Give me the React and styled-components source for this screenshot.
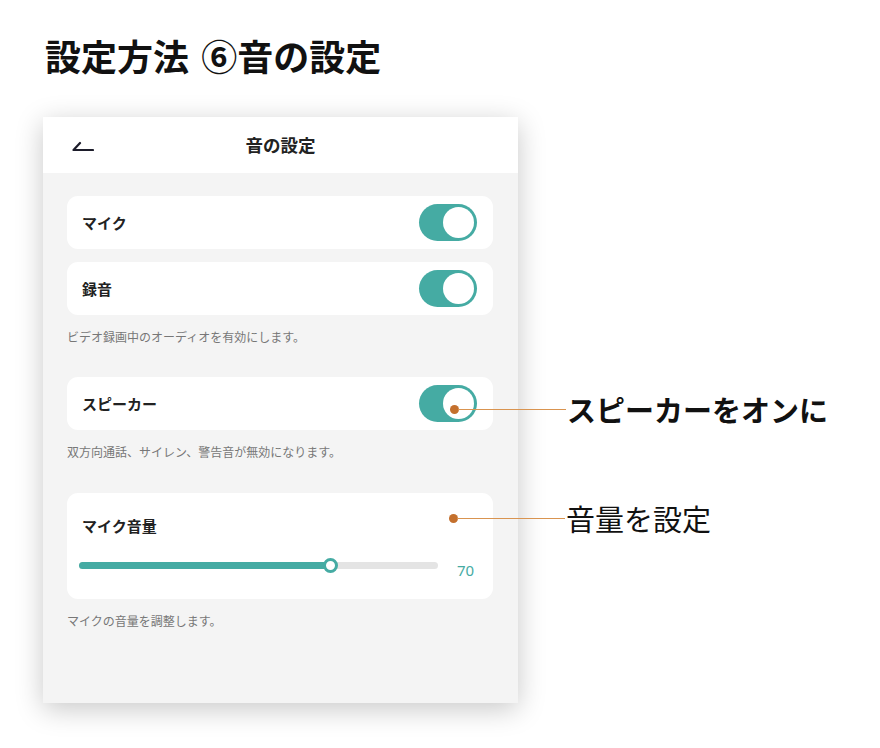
import React from "react";
import styled, { createGlobalStyle } from "styled-components";

const GlobalStyle = createGlobalStyle`
  html, body { margin: 0; padding: 0; background: #ffffff; }
  body { font-family: "Noto Sans CJK JP", "Noto Sans", sans-serif; }
  * { box-sizing: border-box; }
`;

const TEAL = "#45aba3";

const Page = styled.div`
  width: 880px;
  height: 748px;
  padding: 34px 0 0 43px;
  font-family: "Noto Sans CJK JP", "Noto Sans", sans-serif;
`;

const PageTitle = styled.h1`
  margin: 0 0 40px 2px;
  font-size: 36px;
  line-height: 43px;
  font-weight: 700;
  color: #111;
  word-spacing: 4px;
`;

const Phone = styled.div`
  width: 475px;
  height: 586px;
  background: #f4f4f4;
  box-shadow: 0 6px 26px rgba(0, 0, 0, 0.22);
  display: flex;
  flex-direction: column;
`;

const Header = styled.div`
  height: 56px;
  background: #fff;
  display: grid;
  grid-template-columns: 60px 1fr 60px;
  align-items: center;
`;

const BackButton = styled.div`
  padding-left: 29px;
  padding-top: 4px;
  display: flex;
  align-items: center;
`;

const HeaderTitle = styled.div`
  text-align: center;
  font-size: 17.5px;
  font-weight: 700;
  color: #222;
  line-height: 24px;
`;

const Body = styled.div`
  padding: 23px 25px 0 24px;
  display: flex;
  flex-direction: column;
`;

const Group = styled.div`
  display: flex;
  flex-direction: column;
  gap: 13px;
  margin-bottom: ${(p) => p.$mb || 0}px;
`;

const Card = styled.div`
  position: relative;
  background: #fff;
  border-radius: 11px;
  height: ${(p) => p.$h || 53}px;
  padding: 0 16px 0 15px;
  display: flex;
  align-items: center;
  justify-content: space-between;
`;

const VolumeCard = styled(Card)`
  flex-direction: column;
  align-items: stretch;
  justify-content: flex-start;
  padding: 23px 18px 0 12px;
`;

const Label = styled.div`
  font-size: 15px;
  font-weight: 700;
  color: #222;
  line-height: 20px;
  padding-left: ${(p) => p.$pl || 0}px;
`;

const Caption = styled.div`
  margin-top: 1px;
  font-size: 12px;
  line-height: 16px;
  color: #777;
`;

const Toggle = styled.div`
  width: 58px;
  height: 37px;
  border-radius: 19px;
  background: ${TEAL};
  position: relative;
  flex-shrink: 0;
`;

const Knob = styled.div`
  position: absolute;
  top: 3px;
  right: 3px;
  width: 31px;
  height: 31px;
  border-radius: 50%;
  background: #fff;
`;

const SliderRow = styled.div`
  margin-top: 14px;
  display: flex;
  align-items: center;
  gap: 19px;
`;

const Track = styled.div`
  position: relative;
  flex: 1;
  height: 7px;
  border-radius: 4px;
  background: #e4e4e4;
`;

const Fill = styled.div`
  position: absolute;
  left: 0;
  top: 0;
  bottom: 0;
  border-radius: 4px;
  background: ${TEAL};
`;

const Thumb = styled.div`
  position: absolute;
  top: 50%;
  width: 15px;
  height: 15px;
  margin-left: -7.5px;
  margin-top: -7.5px;
  border-radius: 50%;
  background: #fff;
  border: 3px solid ${TEAL};
`;

const Value = styled.div`
  font-family: "Noto Sans", sans-serif;
  font-size: 15px;
  color: ${TEAL};
  width: 18px;
  line-height: 20px;
  margin-top: 10px;
`;

const Callout = styled.div`
  position: absolute;
  left: ${(p) => p.$x}px;
  top: ${(p) => p.$y}px;
  transform: translateY(-50%);
  display: flex;
  align-items: center;
  white-space: nowrap;
`;

const Dot = styled.span`
  width: 9px;
  height: 9px;
  border-radius: 50%;
  background: #c4702d;
  flex-shrink: 0;
`;

const Line = styled.span`
  width: 108px;
  height: 1px;
  background: #d99450;
  margin-left: -1px;
`;

const CalloutText = styled.span`
  margin-left: 1px;
  font-size: 29px;
  line-height: 36px;
  font-weight: ${(p) => (p.$bold ? 700 : 400)};
  color: #111;
`;

const BackArrow = () => (
  <svg width="22" height="12" viewBox="0 0 22 12" fill="none">
    <path d="M8 2 L1.5 9 H21" stroke="#1c1c2a" strokeWidth="2.2" strokeLinecap="round" strokeLinejoin="round" />
  </svg>
);

const Switch = () => (
  <Toggle>
    <Knob />
  </Toggle>
);

export default function App() {
  const volume = 70;
  const pct = volume * 0.7 * 100 / 70;
  return (
    <>
      <GlobalStyle />
      <Page>
        <PageTitle>設定方法 ⑥音の設定</PageTitle>
        <Phone>
          <Header>
            <BackButton>
              <BackArrow />
            </BackButton>
            <HeaderTitle>音の設定</HeaderTitle>
            <div />
          </Header>
          <Body>
            <Group $mb={32}>
              <Card>
                <Label>マイク</Label>
                <Switch />
              </Card>
              <Card>
                <Label>録音</Label>
                <Switch />
              </Card>
              <Caption>ビデオ録画中のオーディオを有効にします。</Caption>
            </Group>
            <Group $mb={33}>
              <Card>
                <Label>スピーカー</Label>
                <Switch />
                <Callout $x={383} $y={32}>
                  <Dot />
                  <Line />
                  <CalloutText $bold>スピーカーをオンに</CalloutText>
                </Callout>
              </Card>
              <Caption>双方向通話、サイレン、警告音が無効になります。</Caption>
            </Group>
            <Group>
              <VolumeCard $h={106}>
                <Label $pl={3}>マイク音量</Label>
                <SliderRow>
                  <Track>
                    <Fill style={{ width: `${pct}%` }} />
                    <Thumb style={{ left: `${pct}%` }} />
                  </Track>
                  <Value>{volume}</Value>
                </SliderRow>
                <Callout $x={382} $y={25}>
                  <Dot />
                  <Line />
                  <CalloutText>音量を設定</CalloutText>
                </Callout>
              </VolumeCard>
              <Caption>マイクの音量を調整します。</Caption>
            </Group>
          </Body>
        </Phone>
      </Page>
    </>
  );
}
